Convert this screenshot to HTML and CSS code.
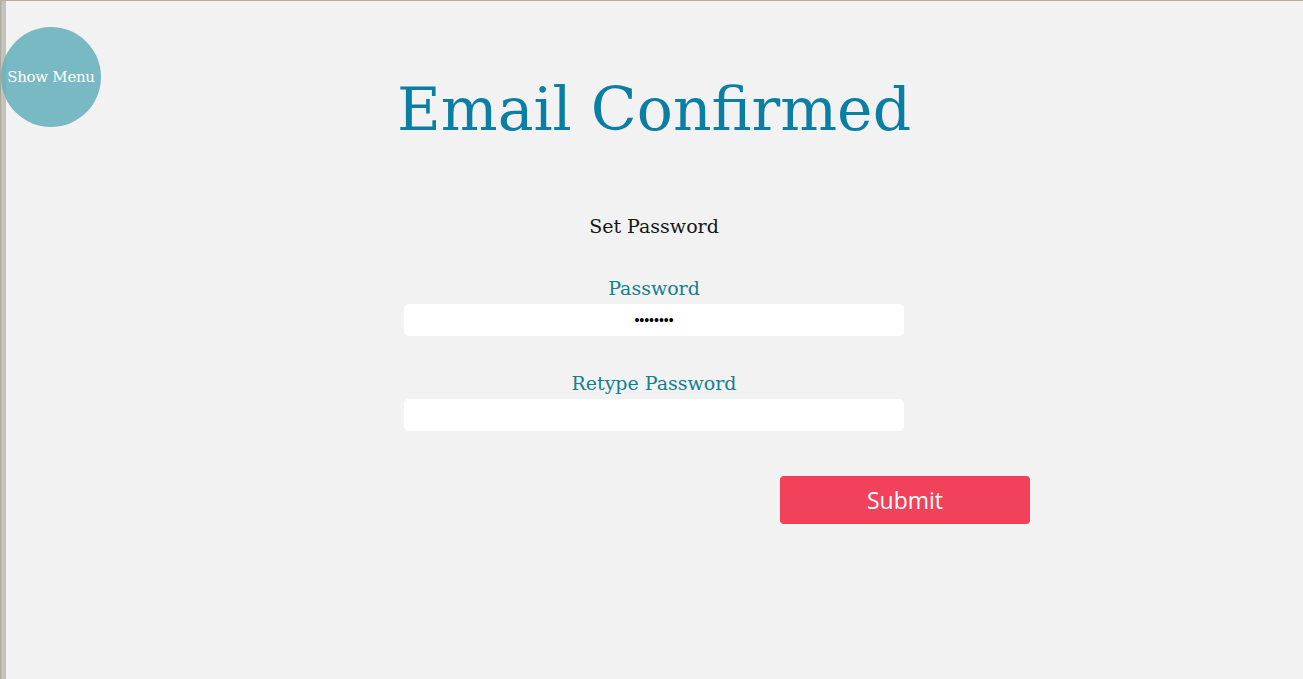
FILE: index.html
```html
<!DOCTYPE html>
<html>
<head>
<meta charset="utf-8">
<link rel="stylesheet" href="styles.css">
</head>
<body>
<div class="page">
  <div class="edge"></div>
  <main class="content">
    <h1 class="title">Email Confirmed</h1>
    <form class="form">
      <div class="subtitle">Set Password</div>
      <label class="label">Password</label>
      <input class="field" type="password" value="12345678">
      <label class="label label-second">Retype Password</label>
      <input class="field" type="password" value="">
      <div class="actions">
        <button class="submit" type="button">Submit</button>
      </div>
    </form>
  </main>
  <button class="menu-btn" type="button">Show Menu</button>
</div>
</body>
</html>
```
FILE: styles.css
```css
html, body {
  margin: 0;
  padding: 0;
  height: 100%;
}
body {
  background: #f2f2f2;
  font-family: "DejaVu Serif", serif;
}
.page {
  position: relative;
  display: flex;
  min-height: 100%;
  box-sizing: border-box;
  border-top: 1px solid #b9ab9e;
}
.edge {
  width: 5px;
  flex: none;
  background: #c4c3ba;
  border-left: 1px solid #a9a89f;
}
.content {
  flex: 1;
  display: flex;
  flex-direction: column;
  align-items: center;
  padding-top: 68px;
  padding-right: 1px;
}
.title {
  margin: 0;
  font-family: "DejaVu Serif", serif;
  font-weight: normal;
  font-size: 60px;
  line-height: 80px;
  color: #0a7fa3;
}
.form {
  display: flex;
  flex-direction: column;
  align-items: center;
  width: 500px;
  margin-top: 64px;
}
.subtitle {
  font-size: 19px;
  line-height: 26px;
  color: #161616;
}
.label {
  margin-top: 36px;
  font-size: 19px;
  line-height: 26px;
  color: #12818f;
}
.label-second {
  margin-top: 34px;
}
.field {
  box-sizing: border-box;
  width: 500px;
  height: 32px;
  border: none;
  border-radius: 5px;
  background: #fff;
  text-align: center;
  font-size: 14px;
  margin-top: 3px;
  outline: none;
  color: #000;
}
.actions {
  width: 500px;
  display: flex;
  justify-content: flex-end;
  margin-top: 45px;
  margin-right: -252px;
}
.submit {
  width: 250px;
  height: 48px;
  border: none;
  border-radius: 4px;
  background: #f2415a;
  color: #fff;
  font-family: "Open Sans", sans-serif;
  font-size: 23px;
  padding: 0;
}
.menu-btn {
  position: absolute;
  left: 1px;
  top: 26px;
  width: 100px;
  height: 100px;
  border-radius: 50%;
  border: none;
  padding: 0;
  background: rgba(104, 176, 188, 0.88);
  color: #fff;
  font-family: "DejaVu Serif", serif;
  font-size: 15px;
  font-weight: 300;
  white-space: nowrap;
  letter-spacing: -0.3px;
}
```
